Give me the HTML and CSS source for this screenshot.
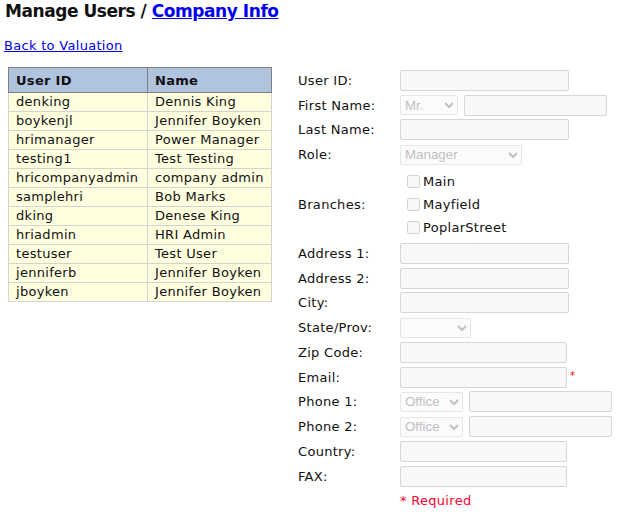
FILE: index.html
```html
<!DOCTYPE html>
<html lang="en">
<head>
    <meta charset="UTF-8">
    <title>Manage Users</title>
    <link rel="stylesheet" href="styles.css">
</head>
<body>
    <h1 class="title">Manage Users / <a href="#">Company Info</a></h1>
    <a class="back" href="#">Back to Valuation</a>

    <div class="page">
        <table class="users">
            <tr><th>User ID</th><th>Name</th></tr>
            <tr><td>denking</td><td>Dennis King</td></tr>
            <tr><td>boykenjl</td><td>Jennifer Boyken</td></tr>
            <tr><td>hrimanager</td><td>Power Manager</td></tr>
            <tr><td>testing1</td><td>Test Testing</td></tr>
            <tr><td>hricompanyadmin</td><td>company admin</td></tr>
            <tr><td>samplehri</td><td>Bob Marks</td></tr>
            <tr><td>dking</td><td>Denese King</td></tr>
            <tr><td>hriadmin</td><td>HRI Admin</td></tr>
            <tr><td>testuser</td><td>Test User</td></tr>
            <tr><td>jenniferb</td><td>Jennifer Boyken</td></tr>
            <tr><td>jboyken</td><td>Jennifer Boyken</td></tr>
        </table>

        <div class="form">
            <div class="row">
                <label>User ID:</label>
                <div class="field"><input type="text" class="txt" disabled></div>
            </div>
            <div class="row">
                <label>First Name:</label>
                <div class="field">
                    <select class="sel sel-title" disabled><option>Mr.</option></select>
                    <input type="text" class="txt txt-short" disabled>
                </div>
            </div>
            <div class="row">
                <label>Last Name:</label>
                <div class="field"><input type="text" class="txt" disabled></div>
            </div>
            <div class="row">
                <label>Role:</label>
                <div class="field"><select class="sel sel-role" disabled><option>Manager</option></select></div>
            </div>
            <div class="row row-branches">
                <label>Branches:</label>
                <div class="checks">
                    <div class="check"><input type="checkbox" disabled><span>Main</span></div>
                    <div class="check"><input type="checkbox" disabled><span>Mayfield</span></div>
                    <div class="check"><input type="checkbox" disabled><span>PoplarStreet</span></div>
                </div>
            </div>
            <div class="row">
                <label>Address 1:</label>
                <div class="field"><input type="text" class="txt" disabled></div>
            </div>
            <div class="row">
                <label>Address 2:</label>
                <div class="field"><input type="text" class="txt" disabled></div>
            </div>
            <div class="row">
                <label>City:</label>
                <div class="field"><input type="text" class="txt" disabled></div>
            </div>
            <div class="row">
                <label>State/Prov:</label>
                <div class="field"><select class="sel sel-state" disabled><option></option></select></div>
            </div>
            <div class="row">
                <label>Zip Code:</label>
                <div class="field"><input type="text" class="txt txt-b" disabled></div>
            </div>
            <div class="row">
                <label>Email:</label>
                <div class="field"><input type="text" class="txt txt-b" disabled><span class="star">*</span></div>
            </div>
            <div class="row">
                <label>Phone 1:</label>
                <div class="field">
                    <select class="sel sel-phone" disabled><option>Office</option></select>
                    <input type="text" class="txt txt-short" disabled>
                </div>
            </div>
            <div class="row">
                <label>Phone 2:</label>
                <div class="field">
                    <select class="sel sel-phone" disabled><option>Office</option></select>
                    <input type="text" class="txt txt-short" disabled>
                </div>
            </div>
            <div class="row">
                <label>Country:</label>
                <div class="field"><input type="text" class="txt txt-b" disabled></div>
            </div>
            <div class="row">
                <label>FAX:</label>
                <div class="field"><input type="text" class="txt txt-b" disabled></div>
            </div>
            <div class="row">
                <label></label>
                <div class="required">* Required</div>
            </div>
        </div>
    </div>
</body>
</html>
```

FILE: styles.css
```css
body {
    margin: 4px;
    font-family: "DejaVu Sans", Verdana, sans-serif;
    font-size: 13px;
    letter-spacing: 0.3px;
    color: #111;
    background: #fff;
}
a {
    color: #0000ee;
}
.title {
    font-size: 17px;
    font-weight: bold;
    letter-spacing: -0.45px;
    margin: 0 0 0 1px;
    line-height: 14px;
}
.back {
    display: inline-block;
    margin-top: 20px;
    line-height: 15px;
}
.page {
    display: flex;
    gap: 26px;
    margin-top: 14px;
}
.users {
    border-collapse: collapse;
    margin: 0 0 0 4px;
    align-self: flex-start;
    width: 264px;
}
.users th {
    background-color: #b0c4de;
    border: 1px solid #808080;
    text-align: left;
    padding: 0 7px;
    height: 24px;
}
.users th:first-child {
    width: 124px;
}
.users td {
    background-color: #ffffe0;
    border: 1px solid #d3d3d3;
    padding: 0 7px;
    height: 18px;
    line-height: 18px;
}
.form {
    display: flex;
    flex-direction: column;
    padding-top: 1px;
}
.row {
    display: flex;
    align-items: center;
    height: 24.75px;
}
.row label {
    width: 102px;
    flex-shrink: 0;
}
.row-branches {
    height: 74px;
}
.field {
    display: flex;
    align-items: center;
    gap: 6px;
}
.txt {
    box-sizing: border-box;
    width: 169px;
    height: 21px;
    border: 1px solid #d6d6d6;
    border-radius: 2px;
    background: #f8f8f8;
    margin: 0;
}
.txt-b {
    width: 167px;
}
.txt-short {
    width: 143px;
}
.sel {
    box-sizing: border-box;
    height: 20px;
    font-family: "Liberation Sans", Arial, sans-serif;
    font-size: 13.33px;
    letter-spacing: 0;
    color: #a6a6a6;
    border: 1px solid #dcdcdc;
    border-radius: 2px;
    background: #fafafa;
    margin: 0;
}
.sel-title {
    width: 58px;
}
.sel-role {
    width: 122px;
}
.sel-state {
    width: 71px;
}
.sel-phone {
    width: 63px;
}
.checks {
    display: flex;
    flex-direction: column;
}
.check {
    display: flex;
    align-items: center;
    height: 23px;
}
.check input {
    margin: 0 3px 0 7px;
    width: 13px;
    height: 13px;
}
.star {
    color: #ff0000;
    font-size: 10px;
    margin-left: -3px;
    margin-top: -4px;
}
.required {
    color: #ff0033;
}
```
